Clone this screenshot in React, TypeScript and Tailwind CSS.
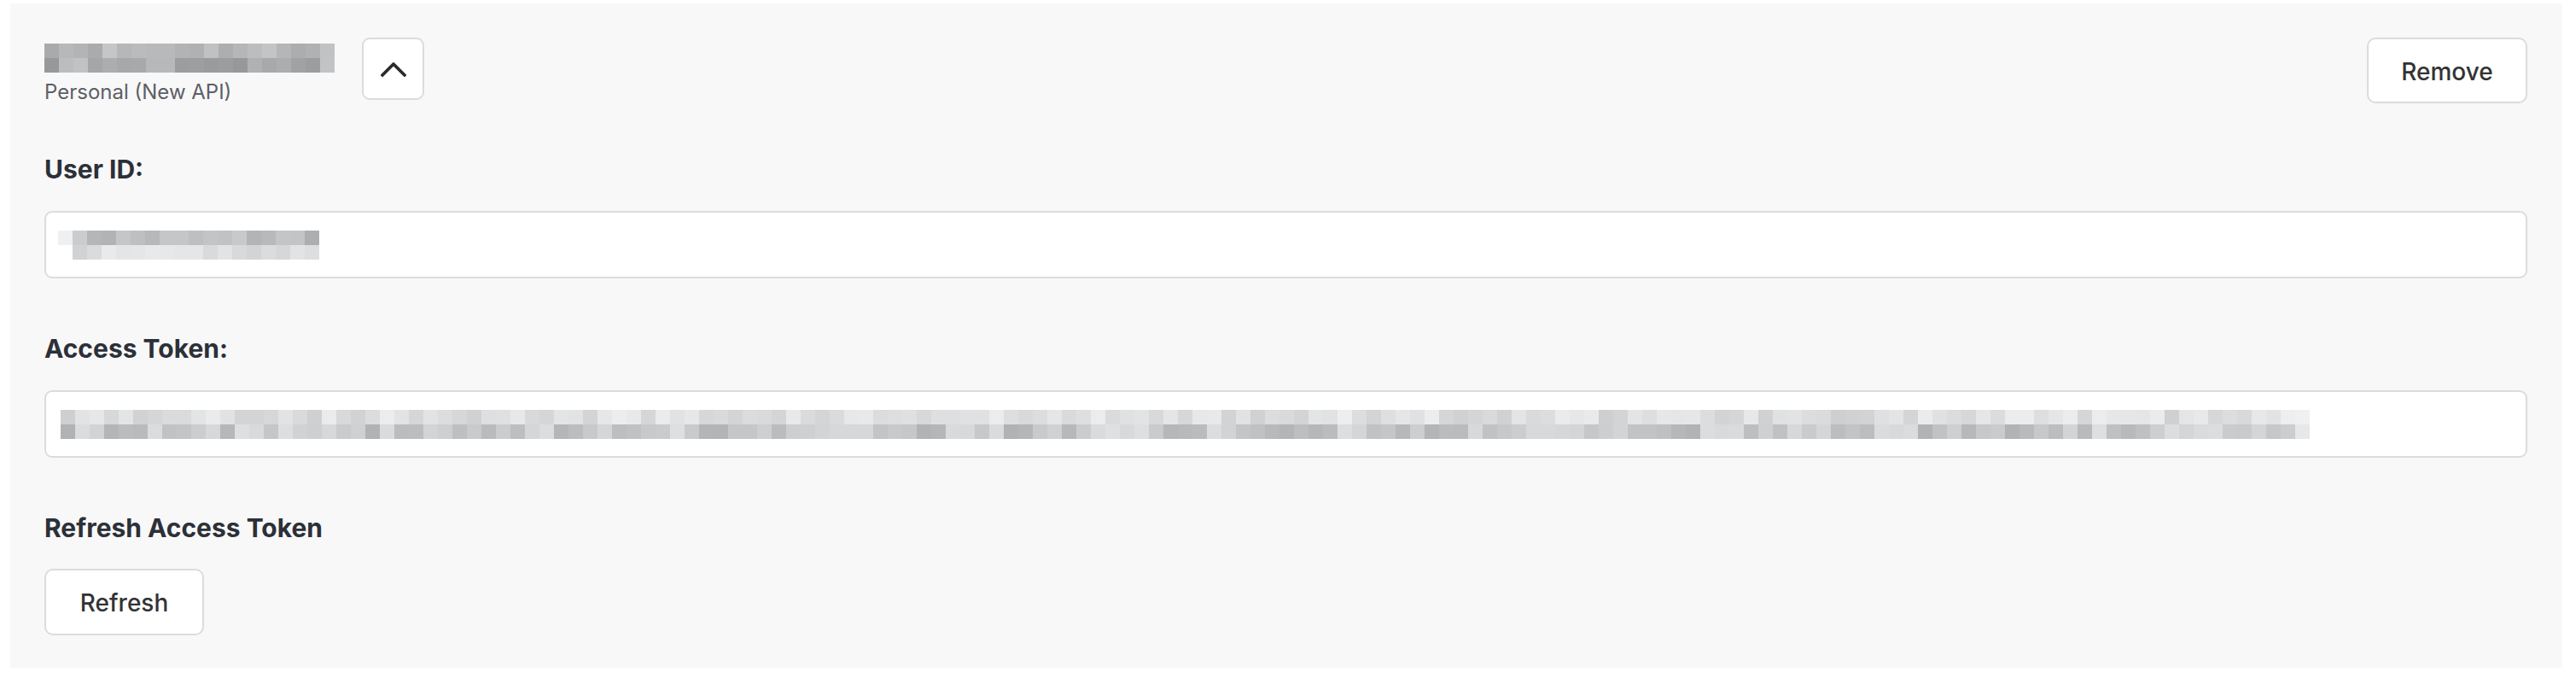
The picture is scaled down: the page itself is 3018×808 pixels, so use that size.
import { useMemo } from "react";

type Row = { offset: number; count: number; lo: number; hi: number; seed: number; first?: number; last?: number };

function shades(row: Row) {
  let s = row.seed;
  const out: string[] = [];
  for (let i = 0; i < row.count; i++) {
    s = (s * 16807) % 2147483647;
    const r = (s - 1) / 2147483646;
    let v = Math.round(row.lo + (row.hi - row.lo) * r);
    if (i === 0 && row.first) v = row.first;
    if (i === row.count - 1 && row.last) v = row.last;
    out.push(`rgb(${v}, ${v + 2}, ${v + 4})`);
  }
  return out;
}

function Mosaic({ rows }: { rows: Row[] }) {
  const colors = useMemo(() => rows.map(shades), [rows]);
  return (
    <div className="flex flex-col">
      {rows.map((row, ri) => (
        <div key={ri} className="flex h-[17px]" style={{ marginLeft: row.offset }}>
          {colors[ri].map((c, i) => (
            <span key={i} className="block h-[17px] w-[17px] shrink-0" style={{ backgroundColor: c }} />
          ))}
        </div>
      ))}
    </div>
  );
}

const nameRows: Row[] = [
  { offset: 0, count: 20, lo: 168, hi: 200, seed: 11 },
  { offset: 0, count: 20, lo: 150, hi: 196, seed: 29 },
];

const userRows: Row[] = [
  { offset: 0, count: 18, lo: 170, hi: 205, seed: 7, first: 238 },
  { offset: 17, count: 17, lo: 208, hi: 232, seed: 41 },
];

const tokenRows: Row[] = [
  { offset: 0, count: 155, lo: 205, hi: 236, seed: 5, last: 238 },
  { offset: 0, count: 155, lo: 176, hi: 222, seed: 83, last: 230 },
];

const font = { fontFamily: "Inter, 'Noto Sans', sans-serif" };

function Field({ label, rows, inset }: { label: string; rows: Row[]; inset: string }) {
  return (
    <div>
      <div className="text-[30px] leading-[36px] font-bold text-[#2c3038]">{label}</div>
      <div className={`mt-[31px] flex h-[79px] items-center rounded-[9px] border-2 border-[#dcdcdc] bg-white ${inset}`}>
        <Mosaic rows={rows} />
      </div>
    </div>
  );
}

export default function App() {
  return (
    <div className="h-[808px] w-[3018px] bg-white pt-[4px] pl-[12px]" style={font}>
      <div className="w-[2990px] h-[778px] bg-[#f8f8f8] pt-[40px] pl-[40px] pr-[41px]">
        <div className="flex items-start justify-between">
          <div className="flex items-start">
            <div className="pt-[7px]">
              <Mosaic rows={nameRows} />
              <div className="mt-[8px] text-[24px] leading-[30px] text-[#5c6066]">Personal (New API)</div>
            </div>
            <button className="ml-[32px] flex h-[73px] w-[73px] items-center justify-center rounded-[9px] border-2 border-[#dcdcdc] bg-white">
              <svg width="30" height="18" viewBox="0 0 30 18" fill="none">
                <polyline points="2,16 15,3 28,16" stroke="#2b2b2b" strokeWidth="3.8" strokeLinecap="round" strokeLinejoin="round" />
              </svg>
            </button>
          </div>
          <button className="flex h-[77px] w-[188px] items-center justify-center rounded-[10px] border-2 border-[#dcdcdc] bg-white pt-[2px] text-[28px] font-medium text-[#333]">
            Remove
          </button>
        </div>

        <div className="mt-[57px] flex flex-col gap-[64px]">
          <Field label="User ID:" rows={userRows} inset="pl-[14px]" />
          <Field label="Access Token:" rows={tokenRows} inset="pl-[17px]" />
          <div>
            <div className="text-[30px] leading-[36px] font-bold text-[#2c3038]">Refresh Access Token</div>
            <button className="mt-[30px] flex h-[78px] w-[187px] items-center justify-center rounded-[10px] border-2 border-[#dcdcdc] bg-white pt-[2px] text-[28px] font-medium text-[#333]">
              Refresh
            </button>
          </div>
        </div>
      </div>
    </div>
  );
}
